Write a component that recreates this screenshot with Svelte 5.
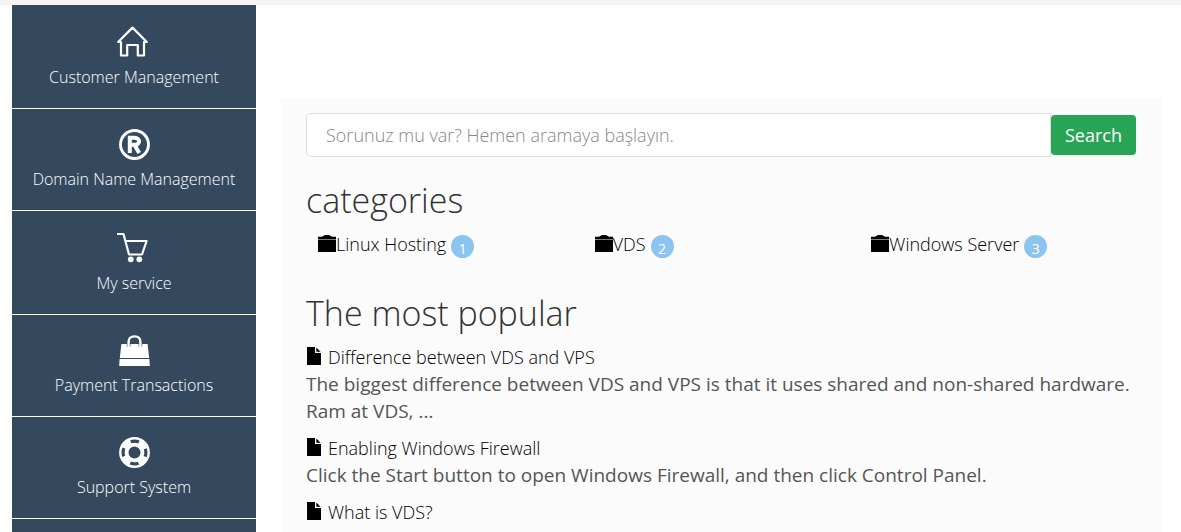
<script>
  const menu = [
    { label: 'Customer Management', icon: 'home', outline: true },
    { label: 'Domain Name Management', icon: 'registered' },
    { label: 'My service', icon: 'cart', outline: true },
    { label: 'Payment Transactions', icon: 'bag' },
    { label: 'Support System', icon: 'support' },
  ];
  const categories = [
    { name: 'Linux Hosting', count: 1 },
    { name: 'VDS', count: 2 },
    { name: 'Windows Server', count: 3 },
  ];
  const articles = [
    {
      title: 'Difference between VDS and VPS',
      text: 'The biggest difference between VDS and VPS is that it uses shared and non-shared hardware. Ram at VDS, ...',
    },
    {
      title: 'Enabling Windows Firewall',
      text: 'Click the Start button to open Windows Firewall, and then click Control Panel.',
    },
    { title: 'What is VDS?', text: '' },
  ];
</script>

<div class="topline"></div>
<div class="page">
  <nav class="sidebar">
    {#each menu as item}
      <a class="tile" class:outline={item.outline} href="#menu">
        <svg class="tile-icon" viewBox="0 0 31 31" aria-hidden="true">
          {#if item.icon === 'home'}
            <path d="M1.2 16 L15.5 1.6 L29.8 16 H27 V29.5 H20.8 V19 H10.2 V29.5 H4 V16 Z" fill="none" stroke="#fff" stroke-width="2.2" stroke-linejoin="round" />
          {:else if item.icon === 'registered'}
            <circle cx="15.5" cy="15.5" r="14" fill="none" stroke="#fff" stroke-width="2.9" />
            <path d="M10.8 24 V8.8 H15.6 C21.6 8.8 21.4 15.8 16 15.8 H12 M15.6 16 L20.2 24" fill="none" stroke="#fff" stroke-width="4" />
          {:else if item.icon === 'cart'}
            <path d="M0 2 H6.5 L12 22.5 H25 L29.6 9 H8.6" fill="none" stroke="#fff" stroke-width="2.2" stroke-linejoin="round" />
            <circle cx="13.8" cy="27.3" r="2.9" fill="#fff" />
            <circle cx="22.3" cy="27.3" r="2.9" fill="#fff" />
          {:else if item.icon === 'bag'}
            <path d="M2.4 9 H28.6 L30.2 23 H0.8 Z M0.6 24 H30.4 L30.8 31 H0.2 Z" fill="#fff" />
            <path d="M9.6 11.8 V7 Q9.6 1.4 15.5 1.4 T21.4 7 V11.8" fill="none" stroke="#34495e" stroke-width="3.6" />
            <path d="M9.6 12 V7 Q9.6 1.4 15.5 1.4 T21.4 7 V12" fill="none" stroke="#fff" stroke-width="2.4" />
          {:else}
            <circle cx="15.5" cy="15.5" r="10.7" fill="none" stroke="#fff" stroke-width="9.4" />
            <circle cx="15.5" cy="15.5" r="11.4" fill="none" stroke="#34495e" stroke-width="3.2" stroke-dasharray="8.4 9.507" stroke-dashoffset="4.2" />
          {/if}
        </svg>
        <span>{item.label}</span>
      </a>
    {/each}
    <a class="tile" href="#more" aria-label="More"></a>
  </nav>

  <main class="panel">
    <form class="search" onsubmit={(e) => e.preventDefault()}>
      <input type="search" aria-label="Search" placeholder="Sorunuz mu var? Hemen aramaya başlayın." />
      <button type="submit">Search</button>
    </form>

    <h2>categories</h2>
    <ul class="categories">
      {#each categories as c}
        <li>
          <a href="#category">
            <svg class="folder" viewBox="0 0 18 17" aria-hidden="true">
              <path d="M0 4 V1.8 H4 L7 0 H11 L14 1.8 H18 V4 Z M0 4.6 H18 V17 H0 Z" />
            </svg><span>{c.name}</span>
          </a>
          <span class="badge">{c.count}</span>
        </li>
      {/each}
    </ul>

    <h2>The most popular</h2>
    {#each articles as a}
      <article>
        <a class="title" href="#article">
          <svg class="file" viewBox="0 0 14 18" aria-hidden="true">
            <path d="M0 0 H8 V6 H14 V18 H0 Z M9.3 0.6 L13.6 4.8 H9.3 Z" />
          </svg>
          <span>{a.title}</span>
        </a>
        {#if a.text}<p>{a.text}</p>{/if}
      </article>
    {/each}
  </main>
</div>

<style>
  :global(body) {
    margin: 0;
    background: #fff;
    font-family: 'Open Sans', sans-serif;
    font-weight: 300;
    height: 100vh;
    overflow: hidden;
  }
  .topline {
    height: 5px;
    background: #f4f4f4;
  }
  .page {
    display: grid;
    grid-template-columns: 244px 1fr;
    column-gap: 25px;
    padding: 0 19px 0 12px;
  }
  .sidebar {
    display: flex;
    flex-direction: column;
    background: #34495e;
  }
  .tile {
    display: flex;
    flex-direction: column;
    align-items: center;
    padding: 20px 0 19px;
    border-bottom: 1px solid #fff;
    color: #fff;
    font-size: 16px;
    line-height: 24px;
    text-decoration: none;
  }
  .tile-icon {
    width: 31px;
    height: 31px;
    margin-bottom: 7px;
  }
  .outline .tile-icon {
    margin: 1px 4px 8px 0;
  }
  .panel {
    box-sizing: border-box;
    margin-top: 93px;
    padding: 15px 26px 0 25px;
    background: #fbfbfb;
    color: #333;
  }
  .search {
    display: flex;
    align-items: center;
  }
  .search input {
    flex: 1;
    min-width: 0;
    box-sizing: border-box;
    height: 44px;
    padding: 0 19px;
    border: 1px solid #ddd;
    border-radius: 5px 0 0 5px;
    background: #fff;
    font: inherit;
    font-size: 18px;
    outline: 0;
    appearance: none;
  }
  .search input::placeholder {
    color: #888;
    opacity: 1;
  }
  .search button {
    height: 40px;
    padding: 0 14px;
    border: 0;
    border-radius: 4px;
    background: #28a554;
    color: #fff;
    font: inherit;
    font-weight: 400;
    font-size: 18px;
  }
  h2 {
    margin: 23px 0 11px;
    font-size: 34px;
    line-height: 40px;
    font-weight: 300;
  }
  .categories {
    display: grid;
    grid-template-columns: repeat(3, 1fr);
    margin: 0 0 35px;
    padding: 0;
    list-style: none;
  }
  .categories li {
    display: flex;
    align-items: center;
    gap: 5px;
    padding-left: 12px;
    font-size: 18px;
    line-height: 27px;
  }
  .categories a,
  .title {
    display: flex;
    align-items: center;
    color: #000;
    text-decoration: none;
  }
  .folder {
    width: 18px;
    height: 17px;
    margin-bottom: 2px;
  }
  .badge {
    width: 23px;
    height: 23px;
    margin-top: 4px;
    border-radius: 50%;
    background: #8cc4f0;
    color: #fff;
    font-size: 14px;
    font-weight: 400;
    line-height: 27px;
    text-align: center;
  }
  article {
    margin-bottom: 10px;
    font-size: 18px;
    line-height: 27px;
  }
  .title {
    gap: 7px;
  }
  .file {
    width: 14px;
    height: 18px;
    margin: 0 0 3px 1px;
  }
  p {
    margin: 0;
    color: #555;
    font-size: 19px;
    font-weight: 400;
  }
</style>
